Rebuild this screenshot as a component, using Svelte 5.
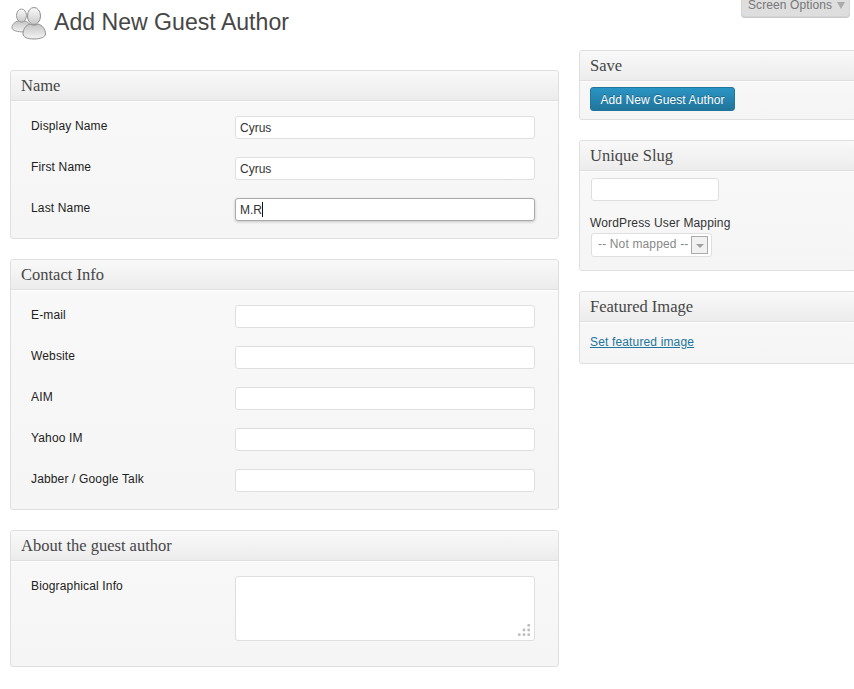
<script>
  const nameFields = [
    { label: 'Display Name', value: 'Cyrus' },
    { label: 'First Name', value: 'Cyrus' },
    { label: 'Last Name', value: 'M.R', focus: true }
  ];
  const contactFields = ['E-mail', 'Website', 'AIM', 'Yahoo IM', 'Jabber / Google Talk'];
  const grip = [
    [10.7, 1.3],
    [6, 6],
    [10.7, 6],
    [1.3, 10.7],
    [6, 10.7],
    [10.7, 10.7]
  ];
</script>

<div class="page">
  <div class="tab-row">
    <div class="screen-tab">Screen Options <span class="arrow"></span></div>
  </div>
  <header class="title">
    <svg class="icon" width="36" height="36" viewBox="0 0 36 36" aria-hidden="true">
      <defs>
        <linearGradient id="g1" x1="0" y1="0" x2="0" y2="1">
          <stop offset="0" stop-color="#fbfbfb" />
          <stop offset="1" stop-color="#c9c9c9" />
        </linearGradient>
        <linearGradient id="g2" x1="0" y1="0" x2="0" y2="1">
          <stop offset="0" stop-color="#c4c4c4" />
          <stop offset="1" stop-color="#f4f4f4" />
        </linearGradient>
      </defs>
      <path d="M1 23c0-4 3-6 6-7 3 1 5 1 7 0 2 .6 3.5 1.500 4.500 3l-5 8c-7 0-12.500-1.500-12.500-4z" fill="url(#g2)" stroke="#9a9a9a" stroke-width="1" />
      <ellipse cx="10.500" cy="10.500" rx="5" ry="6.500" fill="url(#g1)" stroke="#9a9a9a" stroke-width="1" />
      <path d="M12 29c0-5 3-9 7-10 3 1.500 5 1.500 8 0 4 1 7.500 5 7.500 10 0 3-5 5-11.500 5s-11-2-11-5z" fill="url(#g2)" stroke="#8f8f8f" stroke-width="1" />
      <ellipse cx="23" cy="11" rx="6.500" ry="8.500" fill="url(#g1)" stroke="#8f8f8f" stroke-width="1" />
    </svg>
    <h1>Add New Guest Author</h1>
  </header>

  <div class="columns">
    <main class="left">
      <section class="box">
        <h3>Name</h3>
        <div class="body">
          {#each nameFields as f}
            <div class="row">
              <span class="label">{f.label}</span>
              <div class="input" class:focus={f.focus}>{f.value}{#if f.focus}<i class="caret"></i>{/if}</div>
            </div>
          {/each}
        </div>
      </section>

      <section class="box">
        <h3>Contact Info</h3>
        <div class="body">
          {#each contactFields as label}
            <div class="row">
              <span class="label">{label}</span>
              <div class="input"></div>
            </div>
          {/each}
        </div>
      </section>

      <section class="box">
        <h3>About the guest author</h3>
        <div class="body">
          <div class="row">
            <span class="label">Biographical Info</span>
            <div class="input textarea">
              <svg class="grip" width="13" height="13" viewBox="0 0 13 13" aria-hidden="true">
                {#each grip as [cx, cy]}
                  <circle {cx} {cy} r="1.400" fill="#bbb" />
                {/each}
              </svg>
            </div>
          </div>
        </div>
      </section>
    </main>

    <aside class="right">
      <section class="box">
        <h3>Save</h3>
        <div class="side-body save-body">
          <div class="button">Add New Guest Author</div>
        </div>
      </section>

      <section class="box">
        <h3>Unique Slug</h3>
        <div class="side-body slug-body">
          <div class="input slug"></div>
          <div class="map-label">WordPress User Mapping</div>
          <div class="select">
            <span class="select-text">-- Not mapped --</span>
            <span class="drop"><i></i></span>
          </div>
        </div>
      </section>

      <section class="box">
        <h3>Featured Image</h3>
        <div class="side-body image-body">
          <span class="link">Set featured image</span>
        </div>
      </section>
    </aside>
  </div>
</div>

<style>
  :global(body) {
    margin: 0;
    background: #fff;
    overflow: hidden;
  }
  .page {
    width: 854px;
    height: 689px;
    overflow: hidden;
    position: relative;
    font-family: "Liberation Sans", Arial, sans-serif;
    font-size: 12px;
    letter-spacing: 0.15px;
    color: #333;
  }
  .tab-row {
    position: absolute;
    top: 0;
    right: 4px;
  }
  .screen-tab {
    display: flex;
    width: 109px;
    height: 17px;
    box-sizing: border-box;
    border: 1px solid #d4d4d4;
    border-top: 0;
    border-radius: 0 0 4px 4px;
    background: #dedede;
    color: #777;
    line-height: 10px;
    padding-left: 6px;
    white-space: nowrap;
    letter-spacing: 0.1px;
    box-shadow: 0 1px 0 #c8c8c8;
  }
  .arrow {
    width: 0;
    height: 0;
    margin: 2px 0 0 5px;
    border-left: 4px solid transparent;
    border-right: 4px solid transparent;
    border-top: 7px solid #aaa;
  }
  .title {
    display: flex;
    align-items: flex-start;
    height: 70px;
    padding-left: 11px;
    box-sizing: border-box;
  }
  .icon {
    margin-top: 5px;
    flex: none;
  }
  h1 {
    margin: 6px 0 0 7px;
    font-size: 23.1px;
    font-weight: 400;
    line-height: 32px;
    letter-spacing: 0;
    color: #464646;
  }
  .columns {
    display: flex;
    align-items: flex-start;
    gap: 20px;
    padding-left: 10px;
  }
  .left {
    flex: none;
    width: 549px;
    display: flex;
    flex-direction: column;
    gap: 20px;
  }
  .right {
    flex: none;
    width: 290px;
    margin-top: -20px;
    display: flex;
    flex-direction: column;
    gap: 20px;
  }
  .box {
    border: 1px solid #dfdfdf;
    border-radius: 3px;
    background: linear-gradient(to top, #f5f5f5, #f9f9f9);
  }
  h3 {
    margin: 0;
    height: 29px;
    border-bottom: 1px solid #dfdfdf;
    border-radius: 3px 3px 0 0;
    background: linear-gradient(to top, #ececec, #f9f9f9);
    padding-left: 10px;
    font-family: "Liberation Serif", Georgia, serif;
    font-size: 16.5px;
    font-weight: 400;
    line-height: 29px;
    letter-spacing: 0;
    color: #464646;
    box-shadow: 0 1px 0 #fff;
  }
  .body {
    padding: 15px 23px 17px 20px;
    display: flex;
    flex-direction: column;
    gap: 18px;
  }
  .row {
    display: flex;
    align-items: flex-start;
  }
  .label {
    flex: none;
    width: 204px;
    line-height: 20px;
    color: #222;
  }
  .input {
    width: 300px;
    height: 23px;
    box-sizing: border-box;
    border: 1px solid #dfdfdf;
    border-radius: 3px;
    background: #fff;
    padding-left: 4px;
    line-height: 23px;
    letter-spacing: 0;
    color: #333;
  }
  .input.focus {
    border-color: #aaa;
    box-shadow: 0 1px 3px rgba(0, 0, 0, 0.2);
  }
  .caret {
    display: inline-block;
    width: 1px;
    height: 15px;
    background: #111;
    vertical-align: -3px;
  }
  .textarea {
    height: 65px;
    position: relative;
    margin-bottom: 8px;
  }
  .grip {
    position: absolute;
    right: 3px;
    bottom: 3px;
  }
  .side-body {
    padding: 6px 10px 0;
  }
  .save-body {
    height: 32px;
  }
  .button {
    width: 145px;
    height: 24px;
    box-sizing: border-box;
    border: 1px solid #21759b;
    border-radius: 3px;
    background: linear-gradient(to top, #21759b, #2a95c5);
    color: #fff;
    text-align: center;
    line-height: 24px;
    letter-spacing: 0.1px;
    text-shadow: 0 -1px 0 rgba(0, 0, 0, 0.3);
  }
  .slug-body {
    height: 92px;
    padding-top: 7px;
  }
  .input.slug {
    width: 128px;
    margin-left: 1px;
  }
  .map-label {
    margin-top: 14px;
    line-height: 16px;
    color: #333;
  }
  .select {
    display: flex;
    align-items: center;
    width: 121px;
    height: 24px;
    box-sizing: border-box;
    margin: 2px 0 0 1px;
    border: 1px solid #dfdfdf;
    border-radius: 3px;
    background: #fff;
    padding-left: 6px;
    color: #888;
    white-space: nowrap;
  }
  .select-text {
    margin-bottom: 2px;
  }
  .drop {
    flex: none;
    width: 17px;
    height: 18px;
    box-sizing: border-box;
    margin-left: 3px;
    border: 1px solid #aaa;
    background: #f1f1f1;
    display: flex;
    align-items: center;
    justify-content: center;
  }
  .drop i {
    width: 0;
    height: 0;
    border-left: 4px solid transparent;
    border-right: 4px solid transparent;
    border-top: 4px solid #a0a0a0;
    margin-top: 2px;
  }
  .image-body {
    height: 35px;
    padding-top: 6px;
    line-height: 29px;
  }
  .link {
    color: #21759b;
    text-decoration: underline;
  }
</style>
